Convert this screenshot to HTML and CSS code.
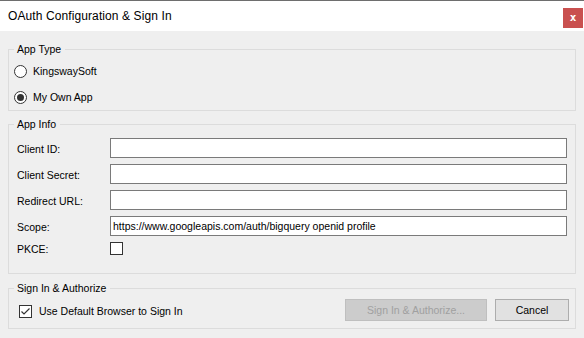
FILE: index.html
```html
<!DOCTYPE html>
<html lang="en">
<head>
    <meta charset="UTF-8">
    <title>OAuth Configuration &amp; Sign In</title>
    <link rel="stylesheet" href="styles.css">
</head>
<body>
    <div class="window">
        <div class="titlebar">
            <span class="title">OAuth Configuration &amp; Sign In</span>
            <button class="close">x</button>
        </div>

        <div class="content">
            <fieldset class="group group-type">
                <legend>App Type</legend>
                <label class="option">
                    <span class="radio"></span>
                    KingswaySoft
                </label>
                <label class="option">
                    <span class="radio checked"></span>
                    My Own App
                </label>
            </fieldset>

            <fieldset class="group group-info">
                <legend>App Info</legend>
                <div class="form-grid">
                    <span class="field-label">Client ID:</span>
                    <div class="textbox"></div>
                    <span class="field-label">Client Secret:</span>
                    <div class="textbox"></div>
                    <span class="field-label">Redirect URL:</span>
                    <div class="textbox"></div>
                    <span class="field-label">Scope:</span>
                    <div class="textbox">https://www.googleapis.com/auth/bigquery openid profile</div>
                    <span class="field-label pkce">PKCE:</span>
                    <span class="check"></span>
                </div>
            </fieldset>

            <fieldset class="group group-sign">
                <legend>Sign In &amp; Authorize</legend>
                <div class="sign-row">
                    <label class="option browser">
                        <span class="check checked">
                            <svg width="11" height="11" viewBox="0 0 11 11"><path d="M1.5 5.5 L4 8 L9.5 2.5" fill="none" stroke="#333" stroke-width="1.2"/></svg>
                        </span>
                        Use Default Browser to Sign In
                    </label>
                    <button class="btn btn-disabled">Sign In &amp; Authorize...</button>
                    <button class="btn">Cancel</button>
                </div>
            </fieldset>
        </div>
    </div>
</body>
</html>
```

FILE: styles.css
```css
/* Ventana de diálogo */
body {
    margin: 0;
    padding: 0;
    font-family: "Liberation Sans", Arial, sans-serif;
    font-size: 10.5px;
    color: #000;
    background: #efefef;
}

.window {
    width: 584px;
    height: 338px;
    display: flex;
    flex-direction: column;
    background: #efefef;
}

.titlebar {
    border-top: 1px solid #6e6e6e;
    height: 30px;
    background: #fff;
    display: flex;
    align-items: center;
    justify-content: space-between;
    padding-left: 8px;
}

.title {
    font-size: 12px;
    letter-spacing: 0.1px;
}

.close {
    align-self: flex-start;
    margin-top: 7px;
    margin-right: 1px;
    width: 20px;
    height: 20px;
    border: none;
    padding: 0;
    background: #c9504f;
    color: #fff;
    font-family: "DejaVu Sans Mono", monospace;
    font-weight: bold;
    font-size: 11px;
    line-height: 18px;
}

.content {
    padding: 12px 8px 0 8px;
    display: flex;
    flex-direction: column;
}

/* Grupos */
.group {
    margin: 0;
    border: 1px solid #dcdcdc;
    padding: 0 8px 0 5px;
    min-width: 0;
}

.group legend {
    padding: 0 4px 0 3px;
    line-height: 13px;
}

.group-type {
    padding-top: 2px;
}

.group-info {
    margin-top: 7px;
    padding-top: 7px;
    padding-bottom: 18px;
}

.group-sign {
    margin-top: 8px;
    padding-top: 4px;
    padding-bottom: 7px;
    padding-right: 6px;
}

.option {
    display: flex;
    align-items: center;
    gap: 6px;
    height: 26px;
}

.radio {
    width: 11px;
    height: 11px;
    border: 1px solid #333;
    border-radius: 50%;
    background: #fff;
    display: flex;
    align-items: center;
    justify-content: center;
}

.radio.checked::after {
    content: '';
    width: 7px;
    height: 7px;
    border-radius: 50%;
    background: #333;
}

/* Formulario */
.form-grid {
    display: grid;
    grid-template-columns: 96px 1fr;
    grid-template-rows: repeat(4, 20px) 13px;
    row-gap: 6px;
    align-items: center;
}

.field-label {
    padding-left: 3px;
    padding-top: 2px;
}

.form-grid .pkce {
    padding-top: 0;
}

.textbox {
    height: 18px;
    border: 1px solid #7a7a7a;
    background: #fff;
    padding: 0 2px;
    line-height: 18px;
    white-space: nowrap;
    overflow: hidden;
}

.check {
    width: 11px;
    height: 11px;
    border: 1px solid #333;
    background: #fff;
    display: flex;
    align-items: center;
    justify-content: center;
}

/* Fila de inicio de sesión */
.sign-row {
    display: flex;
    align-items: center;
    height: 22px;
}

.browser {
    margin-left: 5px;
    gap: 7px;
    margin-right: auto;
    padding-top: 2px;
}

.btn {
    height: 22px;
    width: 74px;
    border: 1px solid #adadad;
    background: #e1e1e1;
    font-family: inherit;
    font-size: 10.5px;
    color: #000;
    padding: 0;
    margin-left: 8px;
}

.btn-disabled {
    width: 142px;
    background: #cccccc;
    border-color: #bfbfbf;
    color: #a0a0a0;
}
```
